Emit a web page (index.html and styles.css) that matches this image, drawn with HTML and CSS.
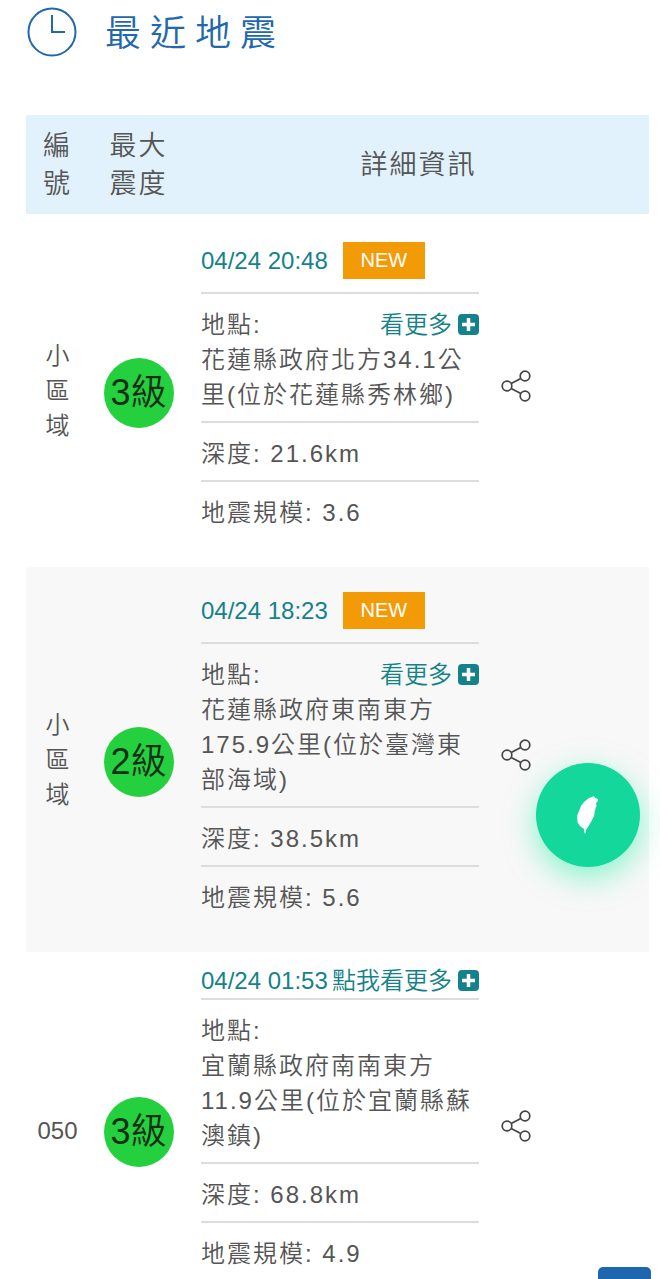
FILE: index.html
```html
<!DOCTYPE html>
<html lang="zh-Hant">
<head>
    <meta charset="UTF-8">
    <meta name="viewport" content="width=device-width, initial-scale=1">
    <title>最近地震</title>
    <link rel="stylesheet" href="styles.css">
</head>
<body>
    <svg class="symbols" aria-hidden="true">
        <symbol id="share" viewBox="0 0 32 34">
            <g fill="none" stroke="#444" stroke-width="1.7">
                <circle cx="6" cy="17" r="4.800"/>
                <circle cx="24" cy="7" r="4.800"/>
                <circle cx="24" cy="27" r="4.800"/>
                <path d="M10.200 14.6 19.800 9.400M10.200 19.400 19.800 24.6"/>
            </g>
        </symbol>
        <symbol id="plus" viewBox="0 0 21 21">
            <rect width="21" height="21" rx="4" fill="#14828a"/>
            <path d="M10.500 4v13M4 10.500h13" stroke="#fff" stroke-width="3.500"/>
        </symbol>
    </svg>

    <header class="title">
        <svg class="clock" viewBox="0 0 50 50" aria-hidden="true">
            <g fill="none" stroke="#2268ad" stroke-width="2">
                <circle cx="25" cy="25" r="23.500"/>
                <path d="M25 8v17h13"/>
            </g>
        </svg>
        <h1>最近地震</h1>
    </header>

    <main>
        <table class="quakes">
            <colgroup>
                <col class="col-no">
                <col class="col-level">
                <col class="col-info">
                <col>
            </colgroup>
            <thead>
                <tr>
                    <th>編號</th>
                    <th>最大震度</th>
                    <th colspan="2">詳細資訊</th>
                </tr>
            </thead>
            <tbody>
                <tr>
                    <td class="no"><span class="vertical">小區域</span></td>
                    <td class="max"><span class="level">3級</span></td>
                    <td class="info">
                        <div class="time new"><a href="#">04/24 20:48</a><span class="badge">NEW</span></div>
                        <div class="item">
                            <div class="place"><span>地點:</span><a class="more" href="#">看更多<svg><use href="#plus"/></svg></a></div>
                            花蓮縣政府北方34.1公里(位於花蓮縣秀林鄉)
                        </div>
                        <div class="item">深度: 21.6km</div>
                        <div class="item">地震規模: 3.6</div>
                    </td>
                    <td class="share"><button type="button" aria-label="分享"><svg><use href="#share"/></svg></button></td>
                </tr>
                <tr>
                    <td class="no"><span class="vertical">小區域</span></td>
                    <td class="max"><span class="level">2級</span></td>
                    <td class="info">
                        <div class="time new"><a href="#">04/24 18:23</a><span class="badge">NEW</span></div>
                        <div class="item">
                            <div class="place"><span>地點:</span><a class="more" href="#">看更多<svg><use href="#plus"/></svg></a></div>
                            花蓮縣政府東南東方175.9公里(位於臺灣東部海域)
                        </div>
                        <div class="item">深度: 38.5km</div>
                        <div class="item">地震規模: 5.6</div>
                    </td>
                    <td class="share"><button type="button" aria-label="分享"><svg><use href="#share"/></svg></button></td>
                </tr>
                <tr>
                    <td class="no">050</td>
                    <td class="max"><span class="level">3級</span></td>
                    <td class="info">
                        <div class="time"><a href="#">04/24 01:53</a><a class="more" href="#">點我看更多<svg><use href="#plus"/></svg></a></div>
                        <div class="item">
                            <div class="place"><span>地點:</span></div>
                            宜蘭縣政府南南東方11.9公里(位於宜蘭縣蘇澳鎮)
                        </div>
                        <div class="item">深度: 68.8km</div>
                        <div class="item">地震規模: 4.9</div>
                    </td>
                    <td class="share"><button type="button" aria-label="分享"><svg><use href="#share"/></svg></button></td>
                </tr>
            </tbody>
        </table>
    </main>

    <button type="button" class="fab" aria-label="臺灣">
        <svg viewBox="0 0 22 38" aria-hidden="true">
            <path fill="#fff" d="M12 2 15 1 17 0 18 2 21 3 21 5 19 7 19.500 10 18 14 17 20 14 26 11 31 9 34 9 37 7.500 37.500 7 33 3 30 .5 26 0 20 2 15 4 10 7 6Z"/>
        </svg>
    </button>
    <button type="button" class="to-top" aria-label="回頂端"></button>
</body>
</html>
```
FILE: styles.css
```css
* { box-sizing: border-box; }

body {
    margin: 0;
    font-family: "Liberation Sans", "Noto Sans CJK TC", sans-serif;
    font-size: 24px;
    font-weight: 350;
    line-height: 35px;
    color: #555;
    background: #fff;
}

a { color: #14828a; text-decoration: none; }
button { border: 0; padding: 0; background: none; cursor: pointer; }
svg { display: block; }
.symbols { display: none; }

/* page title */
.title { display: flex; align-items: center; gap: 28px; padding: 7px 27px 0; }
.title h1 { margin: 0; padding-top: 4px; font-size: 36px; font-weight: 350; line-height: 46px; letter-spacing: 9px; color: #2268ad; }
.clock { width: 50px; height: 50px; }

main { padding: 58px 11px 0 26px; }

/* earthquake list */
.quakes { width: 100%; table-layout: fixed; border-collapse: collapse; }
.col-no { width: 63px; }
.col-level { width: 99px; }
.col-info { width: 304px; }

.quakes th { padding: 12px 16px 11px; background: #e2f2fc; font-size: 27px; font-weight: 350; line-height: 38px; letter-spacing: 2px; }
.quakes td { padding: 0; vertical-align: middle; }
.quakes tbody tr:nth-child(even) { background: #f8f8f8; }

.no { text-align: center; }
.vertical { display: block; width: 24px; margin: 0 auto; }

.quakes .max { padding-top: 4px; }
.level { display: block; width: 70px; height: 70px; margin: 0 auto; border-radius: 50%; background: #25d03f; color: #132f17; font-size: 36px; line-height: 69px; text-align: center; white-space: nowrap; }

.quakes .info { padding: 11px 13px 28px; }
.quakes tr:first-child .info { padding-top: 14px; }
.time { display: flex; align-items: center; justify-content: space-between; height: 37px; border-bottom: 2px solid #ddd; white-space: nowrap; }
.time.new { justify-content: flex-start; gap: 15px; height: 66px; }
.badge { width: 82px; background: #f39a07; color: #fff; font-size: 20px; line-height: 37px; text-align: center; }

.item { padding: 13px 0 9px; border-bottom: 2px solid #ddd; letter-spacing: 2px; }
.item:last-child { border-bottom: 0; }
.place { display: flex; justify-content: space-between; }
.more { display: flex; align-items: center; gap: 6px; letter-spacing: 0; }
.more svg { width: 21px; height: 21px; }

.quakes .share { padding-left: 9px; }
.share svg { width: 32px; height: 34px; }

/* floating buttons */
.fab { position: fixed; right: 20px; bottom: 412px; display: flex; align-items: center; justify-content: center; width: 104px; height: 104px; border-radius: 50%; background: #13d79b; box-shadow: 0 10px 30px rgba(20, 240, 160, 0.5); }
.fab svg { width: 22px; height: 38px; }
.to-top { position: fixed; right: 9px; bottom: -40px; width: 53px; height: 52px; border-radius: 5px; background: #1f66b0; }
```
